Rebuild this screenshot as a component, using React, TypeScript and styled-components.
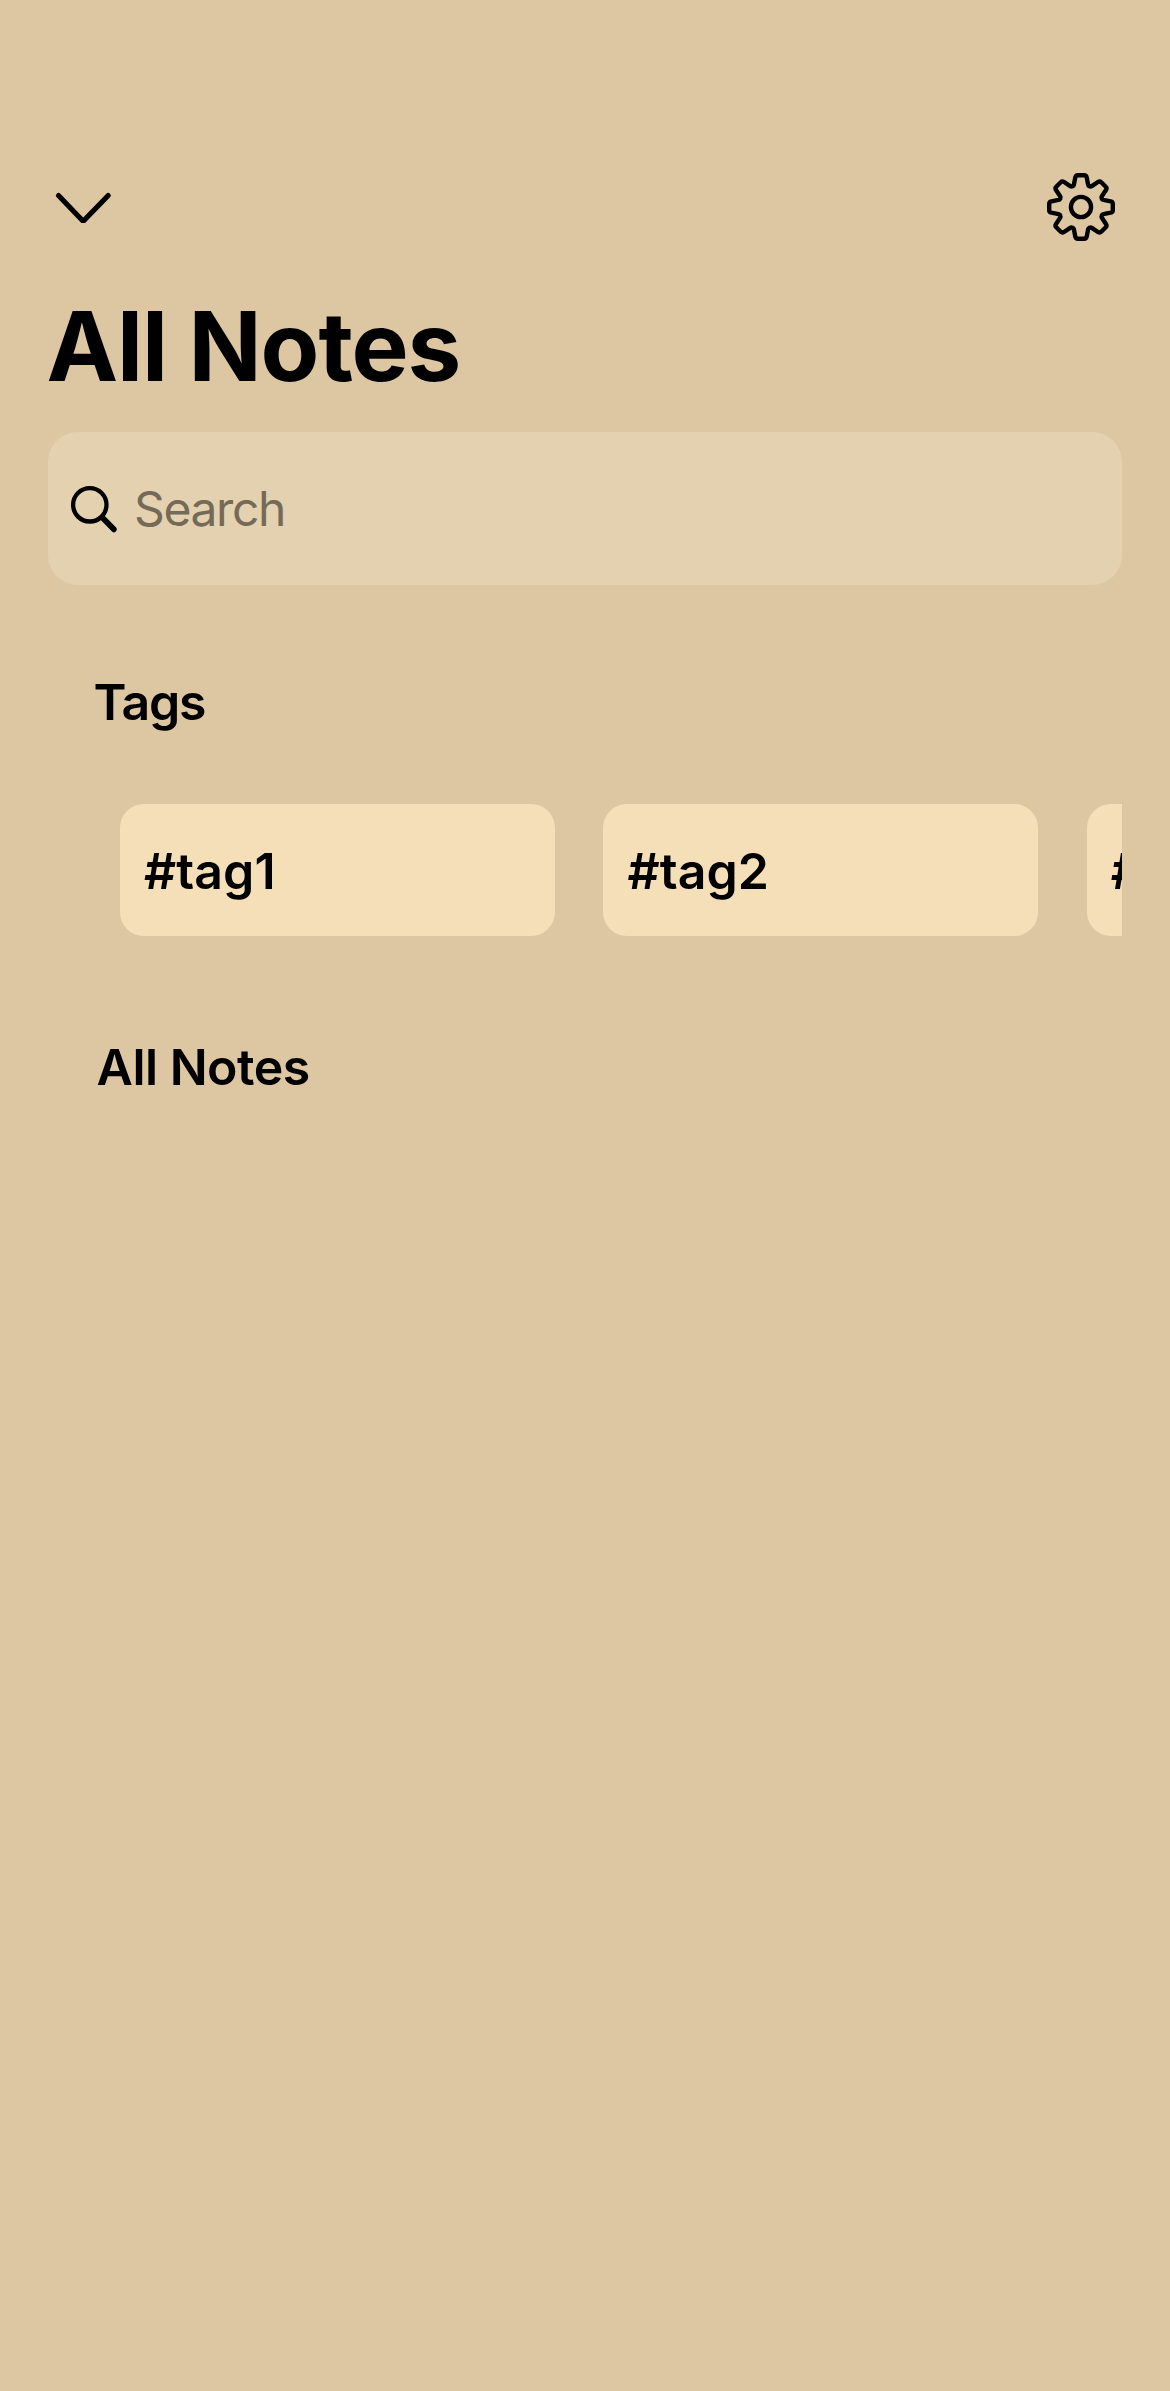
import React from "react";
import styled, { createGlobalStyle } from "styled-components";

const GlobalStyle = createGlobalStyle`
  * { box-sizing: border-box; }
  body { margin: 0; background: #ddc7a2; }
`;

const Screen = styled.main`
  display: flex;
  flex-direction: column;
  width: 1170px;
  height: 2391px;
  padding: 159px 48px 0;
  overflow: hidden;
  background: #ddc7a2;
  color: #000;
  font-family: Inter, "Liberation Sans", sans-serif;
`;

const Toolbar = styled.header`
  display: flex;
  justify-content: space-between;
  align-items: center;
  height: 96px;
`;

const IconButton = styled.button<{ $width: number }>`
  display: flex;
  width: ${(p) => p.$width}px;
  height: 96px;
  padding: 0;
  border: 0;
  background: none;
  color: inherit;
`;

const Title = styled.h1`
  margin: 33px 0 0 -1.5px;
  height: 144px;
  font-size: 96px;
  line-height: 116px;
  font-weight: 700;
  letter-spacing: -1.1px;
  white-space: nowrap;
`;

const SearchBar = styled.label`
  display: flex;
  align-items: center;
  gap: 12px;
  height: 153px;
  padding-left: 20px;
  border-radius: 30px;
  background: #e4d1b0;
`;

const SearchInput = styled.input`
  flex: 1;
  height: 72px;
  padding: 0;
  border: 0;
  outline: 0;
  background: transparent;
  font: 400 48px/72px Inter, "Liberation Sans", sans-serif;
  letter-spacing: -1.4px;
  &::placeholder { color: #756a58; opacity: 1; }
`;

const Heading = styled.h2<{ $top: number; $left: number; $tracking: number }>`
  margin: ${(p) => p.$top}px 0 0 ${(p) => p.$left}px;
  font-size: 50px;
  line-height: 60px;
  font-weight: 600;
  letter-spacing: ${(p) => p.$tracking}px;
`;

const TagRow = styled.div`
  display: flex;
  gap: 48.4px;
  margin-top: 72px;
  padding-left: 72px;
  overflow: hidden;
`;

const Tag = styled.div`
  display: flex;
  flex: 0 0 435px;
  align-items: center;
  height: 132px;
  padding: 2px 0 0 24px;
  border-radius: 24px;
  background: #f5dfb9;
  font-size: 50px;
  line-height: 60px;
  font-weight: 600;
  letter-spacing: 0.1px;
`;

const TEETH = 8;

function polar(x: number, y: number, turn: number) {
  const a = (turn * Math.PI * 2) / TEETH;
  const px = x * Math.cos(a) - y * Math.sin(a);
  const py = x * Math.sin(a) + y * Math.cos(a);
  return `${px.toFixed(2)} ${py.toFixed(2)}`;
}

const gearPath =
  Array.from({ length: TEETH }, (_, i) => {
    const at = (x: number, y: number) => polar(x, y, i);
    return [
      `${i ? "L" : "M"}${at(-8.4, -20.8)}`,
      `Q${at(-7.4, -21.2)} ${at(-7.1, -22.4)}`,
      `L${at(-5.7, -29.6)}`,
      `Q${at(-5.2, -31.8)} ${at(-3.2, -31.8)}`,
      `L${at(3.2, -31.8)}`,
      `Q${at(5.2, -31.8)} ${at(5.7, -29.6)}`,
      `L${at(7.1, -22.4)}`,
      `Q${at(7.4, -21.2)} ${at(8.4, -20.8)}`,
    ].join("");
  }).join("") + "Z";

const GearIcon = () => (
  <svg width="82" height="96" viewBox="-41 -48 82 96" fill="none" stroke="currentColor" strokeWidth="4.4" strokeLinejoin="round">
    <path d={gearPath} />
    <circle r="10.1" />
  </svg>
);

const ChevronIcon = () => (
  <svg width="72" height="96" viewBox="0 0 72 96" fill="none" stroke="currentColor" strokeWidth="5.2" strokeLinecap="round" strokeLinejoin="bevel">
    <path d="M10.5 36.5 35.2 62.2 60.2 36.5" />
  </svg>
);

const SearchIcon = () => (
  <svg width="54" height="54" viewBox="0 0 54 54" fill="none" stroke="currentColor" strokeLinecap="round">
    <circle cx="21.8" cy="22.8" r="16.7" strokeWidth="4.3" />
    <path d="m34.3 35.5 11.5 11.8" strokeWidth="5.8" />
  </svg>
);

const tags = ["#tag1", "#tag2", "#tag3"];

export default function App() {
  return (
    <>
      <GlobalStyle />
      <Screen>
        <Toolbar>
          <IconButton $width={72} aria-label="Close"><ChevronIcon /></IconButton>
          <IconButton $width={82} aria-label="Settings"><GearIcon /></IconButton>
        </Toolbar>
        <Title>All Notes</Title>
        <SearchBar>
          <SearchIcon />
          <SearchInput placeholder="Search" />
        </SearchBar>
        <Heading $top={87} $left={45.5} $tracking={-1.3}>Tags</Heading>
        <TagRow>
          {tags.map((tag) => <Tag key={tag}>{tag}</Tag>)}
        </TagRow>
        <Heading $top={101} $left={48.5} $tracking={-0.5}>All Notes</Heading>
      </Screen>
    </>
  );
}
